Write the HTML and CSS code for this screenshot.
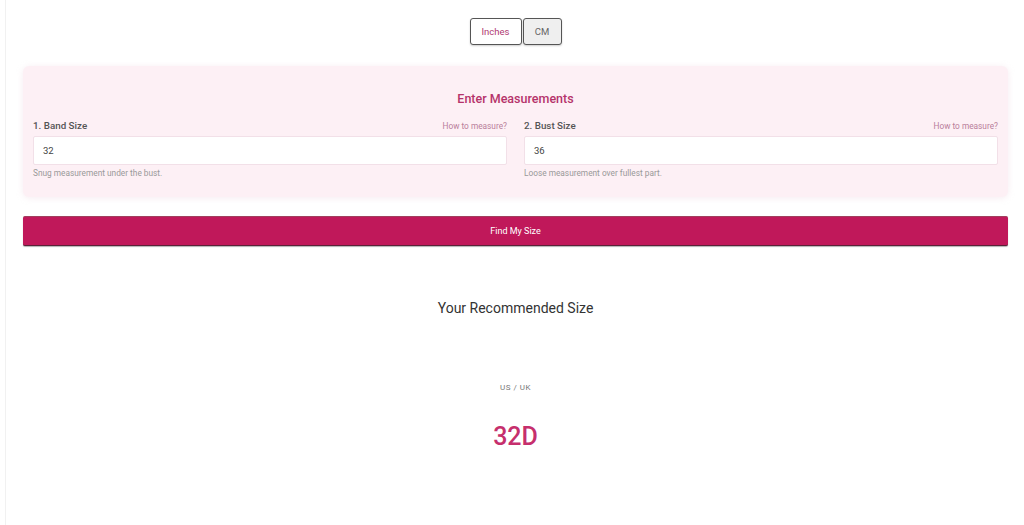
FILE: index.html
```html
<!DOCTYPE html>
<html>
<head>
<meta charset="utf-8">
<link rel="stylesheet" href="styles.css">
</head>
<body>
<div class="page">
  <div class="units">
    <button class="unit active">Inches</button>
    <button class="unit">CM</button>
  </div>
  <section class="card">
    <h2 class="card-title">Enter Measurements</h2>
    <div class="fields">
      <div class="field">
        <div class="field-head"><span class="label">1. Band Size</span><a class="help">How to measure?</a></div>
        <div class="input">32</div>
        <div class="hint">Snug measurement under the bust.</div>
      </div>
      <div class="field">
        <div class="field-head"><span class="label">2. Bust Size</span><a class="help">How to measure?</a></div>
        <div class="input">36</div>
        <div class="hint">Loose measurement over fullest part.</div>
      </div>
    </div>
  </section>
  <button class="find">Find My Size</button>
  <h3 class="result-title">Your Recommended Size</h3>
  <div class="region">US / UK</div>
  <div class="size">32D</div>
</div>
</body>
</html>
```
FILE: styles.css
```css
* { box-sizing: border-box; }
html, body { margin: 0; padding: 0; background: #fff; }
body {
  font-family: Roboto, "Noto Sans", sans-serif;
  color: #333;
  height: 525px;
  overflow: hidden;
}
.page {
  margin-left: 5px;
  border-left: 1px solid #f1f1f1;
  height: 525px;
  padding: 18px 16px 0 17px;
}
.units {
  display: flex;
  justify-content: center;
  gap: 1px;
}
.unit {
  font-family: inherit;
  font-size: 9.5px;
  height: 27px;
  border: 1.5px solid #555;
  border-radius: 3px;
  background: #efefef;
  color: #666;
  padding: 0;
  width: 39px;
  box-shadow: 0 1px 2px rgba(0,0,0,0.2);
}
.unit.active {
  width: 52px;
  background: #fff;
  color: #b03a72;
}
.card {
  margin-top: 21px;
  background: #fdf0f5;
  border-radius: 6px;
  padding: 25px 10px 0 10px;
  height: 131px;
  box-shadow: 0 1px 6px rgba(230,200,215,0.35);
}
.card-title {
  margin: 0;
  text-align: center;
  font-size: 12.5px;
  font-weight: 500;
  color: #b5336a;
  line-height: 16px;
}
.fields {
  display: flex;
  gap: 17px;
  margin-top: 13px;
}
.field { flex: 1; }
.field-head {
  display: flex;
  justify-content: space-between;
  align-items: baseline;
  height: 13px;
}
.label {
  font-size: 9.8px;
  font-weight: 500;
  color: #555;
}
.help {
  font-size: 8.3px;
  color: #b97d9a;
}
.input {
  margin-top: 3px;
  height: 29px;
  background: #fff;
  border: 1px solid #f2e0e8;
  border-radius: 2px;
  font-size: 9.5px;
  color: #444;
  line-height: 27px;
  padding-left: 9px;
}
.hint {
  margin-top: 3px;
  font-size: 8.3px;
  color: #999;
}
.find {
  display: block;
  width: 100%;
  margin-top: 19px;
  height: 30px;
  background: #c0185a;
  color: #fff;
  border: none;
  border-radius: 2px;
  border-bottom: 1.5px solid #5a2238;
  border-top: 1px solid #a0405e;
  font-family: inherit;
  font-size: 9px;
  font-weight: 400;
  box-shadow: 0 1px 1px rgba(0,0,0,0.3);
}
.result-title {
  margin: 54px 0 0;
  text-align: center;
  font-size: 14px;
  font-weight: 400;
  color: #333;
}
.region {
  margin-top: 67px;
  text-align: center;
  font-size: 8px;
  letter-spacing: 0.5px;
  color: #777;
}
.size {
  margin-top: 30px;
  text-align: center;
  font-size: 25px;
  font-weight: 500;
  color: #c62f6d;
}
```
